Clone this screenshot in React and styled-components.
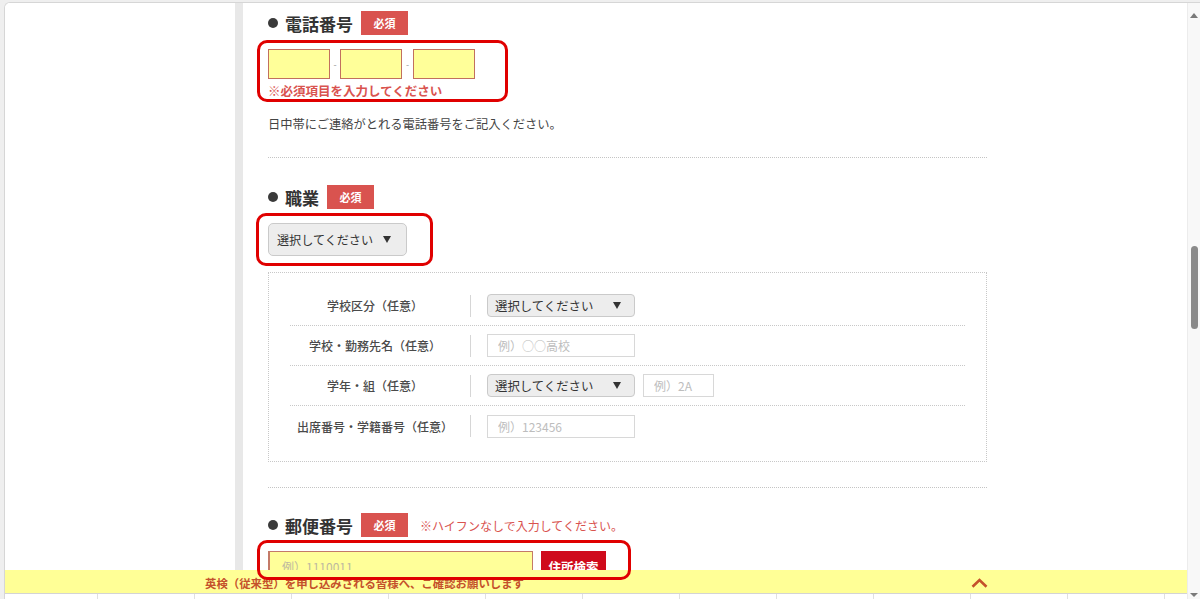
import React from 'react';
import styled, { createGlobalStyle } from 'styled-components';

const GlobalStyle = createGlobalStyle`
  html, body { margin: 0; padding: 0; height: 599px; overflow: hidden; background: #efefef; }
  body { font-family: "Noto Sans CJK JP", "Noto Sans", sans-serif; color: #333; }
  *, *::before, *::after { box-sizing: border-box; }
  input, button { font-family: inherit; margin: 0; }
`;

const Window = styled.div`
  margin: 2px 0 0 4px;
  height: 597px;
  display: flex;
  background: #fff;
  border-top: 1px solid #d6d6d6;
  border-left: 1px solid #d6d6d6;
  border-top-left-radius: 6px;
  overflow: hidden;
`;

const Viewport = styled.div`
  position: relative;
  flex: 1;
  display: flex;
  overflow: hidden;
`;

const LeftPane = styled.div`
  width: 230px;
  flex-shrink: 0;
  background: #fff;
`;

const GrayBar = styled.div`
  width: 8px;
  flex-shrink: 0;
  background: #e8e8e8;
`;

const Main = styled.main`
  width: 744px;
  flex-shrink: 0;
  padding: 8px 0 0 25px;
`;

const Heading = styled.div`
  display: flex;
  align-items: center;
  height: 24px;
  margin-top: ${p => p.$mt || 0}px;
  font-size: 17px;
  font-weight: 700;
  color: #333;
  white-space: nowrap;
`;

const Bullet = styled.span`
  width: 10px;
  height: 10px;
  border-radius: 50%;
  background: #3a3a3a;
  margin-right: 7px;
`;

const Badge = styled.span`
  margin-left: 8px;
  width: 47px;
  height: 24px;
  background: #d9534f;
  color: #fff;
  font-size: 11px;
  font-weight: 700;
  display: flex;
  align-items: center;
  justify-content: center;
`;

const HeadNote = styled.span`
  margin-left: 12px;
  font-size: 12px;
  font-weight: 400;
  color: #d9534f;
`;

const Highlight = styled.div`
  position: relative;
  margin-top: ${p => p.$mt}px;
  &::after {
    content: '';
    box-sizing: border-box;
    position: absolute;
    left: ${p => p.$ox}px;
    top: ${p => p.$oy}px;
    width: ${p => p.$w}px;
    height: ${p => p.$h}px;
    border: 3px solid #e00000;
    border-radius: 10px;
    pointer-events: none;
    z-index: 5;
  }
`;

const InputsRow = styled.div`
  display: flex;
  align-items: center;
`;

const PhoneInput = styled.input`
  width: 62px;
  height: 30px;
  background: #ffff99;
  border: 1px solid #c2705e;
  outline: none;
`;

const Hyphen = styled.span`
  width: ${p => p.$w}px;
  text-align: center;
  font-size: 9px;
  color: #999;
`;

const ErrorText = styled.div`
  margin-top: 4px;
  font-size: 12.5px;
  line-height: 16px;
  font-weight: 700;
  color: #d9534f;
`;

const Help = styled.div`
  margin-top: 16px;
  font-size: 12.25px;
  line-height: 18px;
  color: #444;
`;

const Divider = styled.div`
  margin-top: ${p => p.$mt}px;
  width: 719px;
  border-top: 1px dotted #c4c4c4;
`;

const Select = styled.button`
  display: flex;
  align-items: center;
  width: ${p => p.$w}px;
  height: ${p => p.$h}px;
  padding: 0 0 0 ${p => (p.$big ? 8 : 7)}px;
  background: #ededed;
  border: 1px solid #cacaca;
  border-radius: ${p => (p.$big ? 5 : 4)}px;
  font-size: ${p => (p.$big ? 12.1 : 12.4)}px;
  color: #333;
  white-space: nowrap;
`;

const Arrow = styled.span`
  margin-left: ${p => p.$ml}px;
  width: 0;
  height: 0;
  border-left: 4px solid transparent;
  border-right: 4px solid transparent;
  border-top: 7px solid #333;
`;

const SubBox = styled.div`
  margin-top: 16px;
  width: 719px;
  border: 1px dotted #c8c8c8;
  padding: 13px 21px 15px;
`;

const Row = styled.div`
  display: flex;
  align-items: center;
  height: 40px;
  border-bottom: ${p => (p.$last ? 'none' : '1px dotted #c8c8c8')};
`;

const Label = styled.div`
  width: 170px;
  text-align: center;
  font-size: 12px;
  font-weight: 500;
  color: #4a4a4a;
  white-space: nowrap;
`;

const Sep = styled.span`
  width: 1px;
  height: 22px;
  background: #d6d6d6;
  margin: 0 16px 0 10px;
`;

const Field = styled.div`
  display: flex;
  align-items: center;
  gap: 8px;
`;

const TextInput = styled.input`
  width: ${p => p.$w}px;
  height: 23px;
  border: 1px solid #d8d8d8;
  padding: 0 0 0 10px;
  font-size: 12px;
  color: #333;
  outline: none;
  &::placeholder { color: #bdbdbd; }
`;

const PostalInput = styled.input`
  width: 265px;
  height: 30px;
  background: #ffff99;
  border: 1px solid #c47a68;
  border-left-width: 2px;
  padding: 0 0 0 12px;
  font-size: 12px;
  outline: none;
  &::placeholder { color: #bdb9a0; }
`;

const SearchButton = styled.button`
  margin-left: 8px;
  width: 65px;
  height: 30px;
  border: none;
  background: #cf0a1c;
  color: #fff;
  font-size: 12.5px;
  font-weight: 700;
`;

const Banner = styled.div`
  position: absolute;
  left: 0;
  right: 0;
  bottom: 6px;
  height: 23px;
  background: #ffff96;
  display: flex;
  align-items: center;
  justify-content: space-between;
  padding: 2px 199px 0 200px;
  z-index: 3;
`;

const BannerText = styled.span`
  font-size: 11.4px;
  font-weight: 700;
  color: #c4512b;
  white-space: nowrap;
`;

const BottomStrip = styled.div`
  position: absolute;
  left: 0;
  right: 0;
  bottom: 0;
  height: 6px;
  border-top: 1px solid #d4d4d4;
  background: repeating-linear-gradient(to right, #fff 0 96px, #e0e0e0 96px 97px);
  background-position: -4px 0;
  z-index: 3;
`;

const Scrollbar = styled.div`
  width: 13px;
  flex-shrink: 0;
  display: flex;
  flex-direction: column;
  align-items: center;
  background: #f8f8f8;
  border-left: 1px solid #ececec;
`;

const ScrollUp = styled.span`
  margin-top: 10px;
  width: 0;
  height: 0;
  border-left: 4px solid transparent;
  border-right: 4px solid transparent;
  border-bottom: 5px solid #7a7a7a;
`;

const Thumb = styled.span`
  margin-top: 228px;
  width: 7px;
  height: 83px;
  border-radius: 4px;
  background: #8a8a8a;
`;

const ScrollDown = styled.span`
  margin-top: auto;
  margin-bottom: 2px;
  width: 0;
  height: 0;
  border-left: 4px solid transparent;
  border-right: 4px solid transparent;
  border-top: 4px solid #7a7a7a;
`;

const Chevron = () => (
  <svg width="17" height="10" viewBox="0 0 17 10">
    <polyline points="1.5,8.7 8.5,2 15.5,8.7" fill="none" stroke="#c4512b" strokeWidth="2.6" />
  </svg>
);

const subRows = [
  { label: '学校区分（任意）', kind: 'select' },
  { label: '学校・勤務先名（任意）', kind: 'input', ph: '例）○○高校' },
  { label: '学年・組（任意）', kind: 'both', ph: '例）2A' },
  { label: '出席番号・学籍番号（任意）', kind: 'input', ph: '例）123456' },
];

export default function App() {
  return (
    <>
      <GlobalStyle />
      <Window>
        <Viewport>
          <LeftPane />
          <GrayBar />
          <Main>
            <Heading>
              <Bullet />電話番号<Badge>必須</Badge>
            </Heading>
            <Highlight $mt={14} $ox={-11} $oy={-9} $w={251} $h={62}>
              <InputsRow>
                <PhoneInput />
                <Hyphen $w={10}>-</Hyphen>
                <PhoneInput />
                <Hyphen $w={11}>-</Hyphen>
                <PhoneInput />
              </InputsRow>
              <ErrorText>※必須項目を入力してください</ErrorText>
            </Highlight>
            <Help>日中帯にご連絡がとれる電話番号をご記入ください。</Help>
            <Divider $mt={24} />

            <Heading $mt={27}>
              <Bullet />職業<Badge>必須</Badge>
            </Heading>
            <Highlight $mt={14} $ox={-12} $oy={-10} $w={177} $h={53}>
              <Select $big $w={139} $h={33}>
                選択してください<Arrow $ml={10} />
              </Select>
            </Highlight>
            <SubBox>
              {subRows.map((r, i) => (
                <Row key={r.label} $last={i === subRows.length - 1}>
                  <Label>{r.label}</Label>
                  <Sep />
                  <Field>
                    {(r.kind === 'select' || r.kind === 'both') && (
                      <Select $w={148} $h={23}>
                        選択してください<Arrow $ml={20} />
                      </Select>
                    )}
                    {r.kind === 'input' && <TextInput $w={148} placeholder={r.ph} />}
                    {r.kind === 'both' && <TextInput $w={71} placeholder={r.ph} />}
                  </Field>
                </Row>
              ))}
            </SubBox>
            <Divider $mt={25} />

            <Heading $mt={25}>
              <Bullet />郵便番号<Badge>必須</Badge>
              <HeadNote>※ハイフンなしで入力してください。</HeadNote>
            </Heading>
            <Highlight $mt={14} $ox={-11} $oy={-11} $w={374} $h={40}>
              <InputsRow>
                <PostalInput placeholder="例）1110011" />
                <SearchButton>住所検索</SearchButton>
              </InputsRow>
            </Highlight>
          </Main>
          <Banner>
            <BannerText>英検（従来型）を申し込みされる皆様へ、ご確認お願いします</BannerText>
            <Chevron />
          </Banner>
          <BottomStrip />
        </Viewport>
        <Scrollbar>
          <ScrollUp />
          <Thumb />
          <ScrollDown />
        </Scrollbar>
      </Window>
    </>
  );
}
